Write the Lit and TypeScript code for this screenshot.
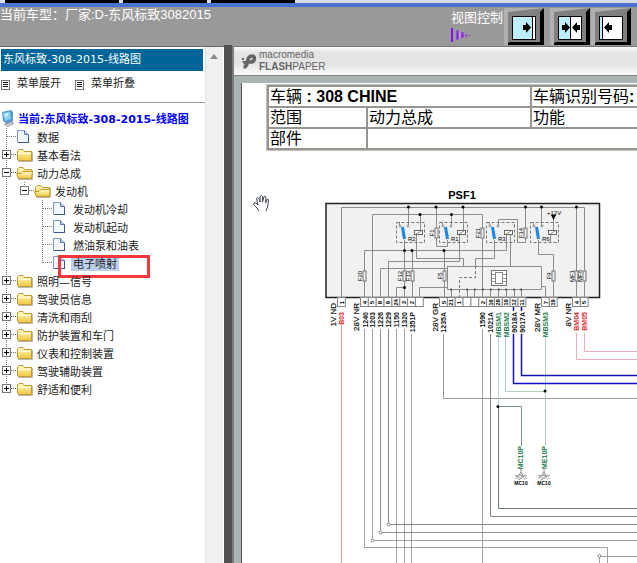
import { LitElement, html, css, svg, nothing } from "lit";
import { customElement, property } from "lit/decorators.js";
import { classMap } from "lit/directives/class-map.js";

type Icon = "file" | "folder" | "open";
interface Row {
  label: string;
  icon: Icon;
  cells: string[];
  selected?: boolean;
}

const folder = (label: string, last = false): Row => ({ label, icon: "folder", cells: [last ? "plus end" : "plus"] });
const leaf = (label: string, last = false, selected = false): Row => ({
  label,
  icon: "file",
  cells: ["guide", "blank", last ? "end" : "joint"],
  selected,
});

const ROWS: Row[] = [
  { label: "数据", icon: "file", cells: ["joint"] },
  folder("基本看法"),
  { label: "动力总成", icon: "open", cells: ["minus"] },
  { label: "发动机", icon: "open", cells: ["guide", "minus end"] },
  leaf("发动机冷却"),
  leaf("发动机起动"),
  leaf("燃油泵和油表"),
  leaf("电子喷射", true, true),
  folder("照明—信号"),
  folder("驾驶员信息"),
  folder("清洗和雨刮"),
  folder("防护装置和车门"),
  folder("仪表和控制装置"),
  folder("驾驶辅助装置"),
  folder("舒适和便利", true),
];

@customElement("tree-menu")
export class TreeMenu extends LitElement {
  static styles = css`
    :host { display: block; }
    ul { list-style: none; margin: 0; padding: 0; }
    .row { display: flex; height: 18px; position: relative; white-space: nowrap; }
    .row svg { flex: none; overflow: visible; display: block; }
    .toggle { border: 0; padding: 0; margin: 0; background: none; width: 18px; height: 18px; flex: none; }
    .label { color: #222; text-decoration: none; line-height: 14px; margin: 4px 0 0 1px; padding: 0 2px; height: 13px; }
    .selected .label { background: #bccfec; }
    .root { display: flex; height: 18px; align-items: center; gap: 2px; white-space: nowrap; }
    .root a { color: #00f; font-weight: bold; text-decoration: none; line-height: 16px; padding-top: 2px; }
    .mark { position: absolute; left: 58px; top: 1px; width: 86px; height: 17px; border: 3px solid #f5373b; pointer-events: none; }
  `;

  private cell(kind: string) {
    const box = kind.startsWith("plus") || kind.startsWith("minus");
    const end = kind.endsWith("end");
    const art = html`<svg width="18" height="18" viewBox="0 0 18 18" aria-hidden="true">
      ${kind === "blank" ? nothing : svg`<path d=${end ? "M6.500 0V9" : "M6.500 0V18"} stroke="#777" stroke-dasharray="1 1" fill="none"/>`}
      ${kind === "blank" || kind === "guide" ? nothing : svg`<path d="M7 8.500H18" stroke="#777" stroke-dasharray="1 1" fill="none"/>`}
      ${box
        ? svg`<rect x="2.500" y="4.500" width="8" height="8" fill="#fff" stroke="#777"/>
          <path d=${kind.startsWith("plus") ? "M4 8.500H9M6.500 6V11" : "M4 8.500H9"} stroke="#000"/>`
        : nothing}
    </svg>`;
    return box
      ? html`<button class="toggle" aria-label=${kind.startsWith("plus") ? "展开" : "折叠"}>${art}</button>`
      : art;
  }

  private icon(kind: Icon) {
    if (kind === "file")
      return html`<svg width="16" height="18" viewBox="0 0 16 18" aria-hidden="true">
        <path d="M-.500 2.500H6.500L10.500 6.500V14.500H-.500Z" fill="#f3f8ff" stroke="#8296c8"/>
        <path d="M6.500 2.500V6.500H10.500" fill="#b9cdf2" stroke="#5f78b8"/>
        <path d="M0 14.500H11M10.500 7V15" stroke="#3f5694"/>
      </svg>`;
    return html`<svg width="16" height="18" viewBox="0 0 16 18" aria-hidden="true">
      <defs><linearGradient id="g" x2="0" y2="1"><stop stop-color="#fffbc4"/><stop offset="1" stop-color="#f1c744"/></linearGradient></defs>
      <path d="M0 15.500H14.500V6" stroke="#b9b9b9" fill="none"/>
      <path d="M-.500 13.500V5L1 3.500H5L6.500 5.500H13.500V14.500H.500Z" fill="url(#g)" stroke="#c39a2b"/>
      ${kind === "open"
        ? svg`<path d="M.500 14.500L-1.500 9.500H3L5 7.500H14.500L13.500 14.500Z" fill="url(#g)" stroke="#c39a2b"/>`
        : svg`<path d="M0 7.500H13" stroke="#fffde0"/>`}
    </svg>`;
  }

  render() {
    return html`
      <div class="root">
        <svg width="16" height="18" viewBox="0 0 16 18" aria-hidden="true">
          <path d="M6 12L12 10L14 14L7 17L4 15Z" fill="#9aa2ad"/>
          <path d="M2 2L11 0L13 2V11L6 13L3 11Z" fill="#5c96cf"/>
          <path d="M3 3L10 1.500L11 9L5 11Z" fill="#7ed2fa"/>
          <path d="M4 4L9 3L6 8Z" fill="#d3f4ff"/>
          <path d="M5 16L12 13" stroke="#e9edf2"/>
        </svg>
        <a href="#">当前:东风标致-308-2015-线路图</a>
      </div>
      <ul>
        ${ROWS.map(
          (r) => html`<li class=${classMap({ row: true, selected: !!r.selected })}>
            ${r.cells.map((c) => this.cell(c))}${this.icon(r.icon)}<a class="label" href="#">${r.label}</a>
            ${r.selected ? html`<span class="mark"></span>` : nothing}
          </li>`
        )}
      </ul>
    `;
  }
}

@customElement("view-button")
export class ViewButton extends LitElement {
  @property() kind = "right";
  static styles = css`
    :host { display: block; }
    button { display: block; border: 0; padding: 0; background: none; }
    svg { display: block; }
  `;
  render() {
    const arrowR = (x: number) => svg`<path d="M${x} 17H${x + 3}V14L${x + 8} 19.500L${x + 3} 25V22H${x}Z" fill="#000"/>`;
    const arrowL = (x: number) => svg`<path d="M${x + 8} 17H${x + 5}V14L${x} 19.500L${x + 5} 25V22H${x + 8}Z" fill="#000"/>`;
    const split = this.kind === "right" ? 28 : this.kind === "both" ? 20 : 11;
    return html`<button aria-label=${this.kind}>
      <svg width="40" height="37" viewBox="0 0 40 37">
        <path d="M0 0H40L36 4H4V37H0Z" fill="#b0b0b0"/>
        <path d="M4 4L40 0L36 34L4 37Z" fill="#808080"/>
        <path d="M4 37V35L6 34H36V4L40 0V37Z" fill="#000"/>
        <rect x="8.500" y="8.500" width="23" height="23" fill="#fff" stroke="#000"/>
        <rect x="9" y="9" width=${split - 9} height="22" fill="#bdeeff"/>
        <path d="M${split + 0.5} 8V32" stroke="#000"/>
        ${this.kind === "right" ? arrowR(19) : this.kind === "both" ? [arrowR(12), arrowL(22)] : arrowL(13)}
      </svg>
    </button>`;
  }
}

const FAR = 2400;

@customElement("wiring-diagram")
export class WiringDiagram extends LitElement {
  static styles = css`
    :host { display: block; }
    svg { display: block; overflow: visible; font-family: "Liberation Sans", sans-serif; }
    .thin { fill: none; stroke: #8c8c8c; stroke-width: 1; }
    .dash { fill: none; stroke: #777; stroke-dasharray: 3 2; }
    .pin { fill: #fff; stroke: #888; }
    .fuse { fill: #eee; stroke: #777; }
    .tag { font-size: 7px; font-weight: bold; text-anchor: end; }
    .num { font-size: 6px; font-weight: bold; text-anchor: middle; }
    .group { font-size: 8px; text-anchor: end; stroke: #111; stroke-width: 0.2px; }
    .small { font-size: 6px; }
    .ground { font-size: 5px; font-weight: bold; text-anchor: middle; }
    .title { font-size: 11px; font-weight: bold; text-anchor: middle; }
  `;

  private relay(x: number, name: string) {
    return svg`
      <rect class="dash" x=${x + 0.5} y="222.500" width="28" height="20"/>
      <circle cx=${x + 4} cy="226" r="1" class="thin"/><circle cx=${x + 12} cy="226" r="1" class="thin"/>
      <path d="M${x + 6.5} 227L${x + 8.5} 239" stroke="#1f83e0" stroke-width="3"/>
      <path class="thin" d="M${x + 8.5} 240V243M${x + 3.5} 222V225"/>
      <rect x=${x + 18.5} y="230.500" width="8" height="4" fill="#fff" stroke="#666"/>
      <path class="thin" d="M${x + 20} 234L${x + 25} 231M${x + 20.5} 235V242"/>
      <text class="small" x=${x + 12} y="241">${name}</text>`;
  }

  private fuse(x: number, y: number, name: string) {
    return svg`<rect class="fuse" x=${x - 1} y=${y} width="3" height="10"/>
      <text class="small" text-anchor="middle" transform="translate(${x - 2} ${y + 5}) rotate(-90)">${name}</text>`;
  }

  private pins(x: number, names: string[]) {
    return names.map(
      (n, i) => svg`<rect class="pin" x=${x + i * 7.85} y="297.500" width="7.850" height="9"/>
        <text class="num" transform="translate(${x + i * 7.85 + 6} 302.500) rotate(-90)">${n}</text>`
    );
  }

  private tag(x: number, name: string, color = "#111", cls = "tag", y = 312) {
    return svg`<text class=${cls} fill=${color} transform="translate(${x + 2.5} ${y}) rotate(-90)">${name}</text>`;
  }

  private wire(d: string, color = "#a2a2a2", width = 1) {
    return svg`<path d=${d} fill="none" stroke=${color} stroke-width=${width}/>`;
  }

  private ground(x: number, name: string) {
    return svg`<path class="thin" d="M${x} 469V472L${x - 2} 475H${x + 2}L${x} 472"/>
      <path d="M${x - 6} 475.500H${x + 6}M${x - 6} 479L${x - 3} 476L${x} 479L${x + 3} 476L${x + 6} 479M${x - 5} 476L${x - 2} 480L${x + 1} 476L${x + 4} 480" fill="none" stroke="#aaa"/>
      <text class="ground" x=${x} y="485">${name}</text>`;
  }

  render() {
    const green = "#157a45";
    const red = "#e8262c";
    const dots = [[408.5, 207], [436, 207], [463, 207], [525.5, 207], [541.5, 207], [576.5, 207], [420, 214.5], [451.5, 214.5],
      [404.5, 250.5], [412, 250.5], [444, 250.5], [404.5, 287.5], [498, 406.5], [545, 391]];
    return html`<svg width="395" height="412" viewBox="242 151 395 412" role="img" aria-label="PSF1">
      ${this.wire("M341.500 325V563", "#dd9a94")}
      ${this.wire(`M364.500 329V547.500H607.500V${FAR}`)}
      ${this.wire(`M372.500 329V540.500H${FAR}`)}
      ${this.wire(`M380.500 329V532.500H${FAR}`, "#929292")}
      ${this.wire(`M388.500 329V524.500H${FAR}`, "#858585")}
      ${this.wire("M396.500 329V563M404.500 329V563M411.500 334V563M482.500 329V563")}
      ${this.wire(`M443.500 334V398.500H${FAR}`, "#999")}
      ${this.wire(`M490.500 334V516.500H${FAR}`, "#858585")}
      ${this.wire("M498.500 337V406", "#b9d3c8")}
      ${this.wire(`M498.500 406V508.500H${FAR}`, "#687a76")}
      ${this.wire("M498 406.500H521.500V446", "#7d9290")}
      ${this.wire("M505.500 337V391.500H545M545.500 337V446", "#b3cfc4")}
      ${this.wire(`M513.500 334V383.500H${FAR}`, "#1010c8", 1.5)}
      ${this.wire(`M521.500 334V375.500H${FAR}`, "#1414a8", 1.5)}
      ${this.wire("M513.500 307V311M521.500 307V311", "#1010c8", 1.5)}
      ${this.wire(`M576.500 333V359.500H${FAR}M584.500 333V351.500H${FAR}`, "#eeb0b6")}
      ${this.wire(`M599.500 563V556.500H${FAR}`)}
      ${[[372.5, 540.5], [380.5, 532.5], [388.5, 524.5], [599.5, 556]].map(
        ([x, y]) => svg`<circle cx=${x} cy=${y} r="1.500" fill="#fff" stroke="#888"/>`
      )}

      <text class="title" x="462" y="199">PSF1</text>
      <rect x="326" y="203.500" width="273.500" height="94" fill="#f1f1f1" stroke="#222" stroke-width="1.500"/>
      <path class="thin" d="M341.500 297V207.500H584.500V297M372.500 297V214.500H482.500V297
        M408.500 207V225M436.500 207V246.500H447.500V242M463.500 207V230M420.500 214V230M451.500 214V225
        M525.500 207V242.500H517.500V219.500H498.500V225M541.500 207V225M553.500 219V230
        M538.500 242V254.500H553.500V297M576.500 207V297
        M364.500 297V250.500H506.500V235M404.500 242V297M412.500 250V297M444.500 250V297
        M416.500 235V258.500H463.500V266M388.500 297V261.500H459.500V235M380.500 297V268.500H447
        M396.500 297V287.500H404M419.500 297V287.500H447M494.500 242V258.500H475.500V266M510.500 235V266
        M447.500 266.500H541.500V286.500H545.500V297M447.500 266V289.500H541.500V286"/>
      <path class="dash" d="M475.500 266V277.500H459.500V297"/>
      <path class="thin" d="M451.500 289V297M467.500 289V297M474.500 289V297M482.500 289V297M490.500 289V297M498.500 289V297M506.500 289V297M514.500 289V297M521.500 289V297"/>
      ${[451, 467, 475, 483, 491, 499, 506, 514, 521].map((x) => svg`<circle cx=${x} cy="289.500" r="1" fill="#444"/>`)}
      ${this.relay(396, "R2")}${this.relay(439, "R1")}${this.relay(486, "R3")}${this.relay(530, "R6")}
      ${this.fuse(436, 228, "F1")}${this.fuse(482, 228, "F21")}${this.fuse(525, 228, "F14")}
      ${this.fuse(364, 271, "F20")}${this.fuse(404, 271, "F12")}${this.fuse(412, 271, "F13")}
      ${this.fuse(444, 271, "F5")}${this.fuse(553, 271, "F9")}${this.fuse(576, 271, "MF1")}${this.fuse(584, 271, "MF6")}
      <rect x="491.500" y="270.500" width="15" height="15" fill="#fff" stroke="#777"/>
      <rect x="495.500" y="272.500" width="7" height="11" fill="#fff" stroke="#888"/>
      <path d="M492 274.500H495M492 278.500H495M492 281.500H495M503 274.500H506M503 278.500H506M503 281.500H506" stroke="#999"/>
      <text class="small" x="547" y="215">+12V</text>
      <path d="M551 215H556L553.500 220Z"/>
      ${dots.map(([x, y]) => svg`<circle cx=${x} cy=${y} r="1.500" fill="#000"/>`)}

      ${this.pins(337.5, ["1"])}
      ${this.pins(360.5, ["4", "5", "8", "9", "24", "3", "2", ""])}
      ${this.pins(439.5, ["5", "21", "1", "", "", "2", "16", "28", "19", "12", "11"])}
      ${this.pins(541.5, ["7", "19"])}
      ${this.pins(572.5, ["4", "5"])}

      ${this.tag(333, "1V ND", "#111", "group", 303)}${this.tag(356, "28V NR", "#111", "group", 303)}
      ${this.tag(435, "28V GR", "#111", "group", 303)}${this.tag(537, "28V MR", "#111", "group", 303)}
      ${this.tag(568, "8V NR", "#111", "group", 303)}
      ${this.tag(341, "B03", red)}
      ${["1240", "1203", "1226", "1229", "1150", "1320", "1351P"].map((t, i) => this.tag(365 + i * 7.85, t))}
      ${this.tag(443, "1235A")}${this.tag(482, "1590")}${this.tag(490, "1021A")}
      ${this.tag(498, "MBSM1", green)}${this.tag(506, "MBSM2", green)}
      ${this.tag(514, "9018A")}${this.tag(522, "9017A")}
      ${this.tag(545, "MBSM3", green)}${this.tag(576, "BM04", red)}${this.tag(584, "BM05", red)}
      ${this.tag(520, "MC10P", green, "tag", 446)}${this.tag(544, "ME10P", green, "tag", 446)}
      ${this.ground(521, "MC10")}${this.ground(544, "MC10")}

      <path d="M259 211L257 208L253.500 204.500Q253.500 202 256 203L258 205L256.500 198.500Q257.500 196.500 259 198.500L260 202V196.500Q261.500 194.500 262.500 196.500V202L264 196.500Q265.500 195.500 266 197.500L265.500 203L267 199.500Q269 199 268.500 201L267.500 207L266 211" fill="#fff" stroke="#3e4650"/>
    </svg>`;
  }
}

@customElement("app-root")
export class AppRoot extends LitElement {
  static styles = css`
    :host {
      display: flex;
      flex-direction: column;
      height: 100vh;
      overflow: hidden;
      background: #999;
      font-family: "Liberation Sans", "Noto Sans CJK SC", sans-serif;
    }
    .tabs { display: flex; gap: 4px; height: 3px; padding-left: 5px; background: #d5dcea; flex: none; }
    .tab { background: #000; width: 84px; }
    .tab.wide { width: 114px; }
    .stripe { height: 4px; background: #4c72cf; flex: none; }
    header { display: flex; justify-content: space-between; height: 38px; padding-right: 6px; color: #fff; font-size: 13px; flex: none; white-space: nowrap; }
    .model { font-size: 13px; line-height: 16px; font-weight: normal; margin: 0; }
    .tools { display: flex; gap: 1px; padding-top: 1px; }
    .tools view-button:first-of-type { margin-right: 5px; }
    .caption { line-height: 20px; }
    .caption svg { display: block; }
    main { display: flex; flex: 1; min-height: 0; }
    aside { display: flex; width: 224px; flex: none; background: #fff; border-top: 1px solid #666; margin-top: 1px; font: 11px "DejaVu Sans", "Noto Sans CJK SC", sans-serif; box-sizing: border-box; }
    .menu { flex: 1; padding-top: 2px; min-width: 0; }
    .menu h2 { margin: 0 2px 0 1px; padding-left: 2px; background: #069; color: #fff; font-size: 11px; font-weight: normal; line-height: 21px; height: 22px; white-space: nowrap; }
    .actions { display: flex; gap: 14px; height: 32px; align-items: center; padding: 0 1px; border-bottom: 1px solid #999; margin-bottom: 7px; box-sizing: border-box; }
    .actions button { display: flex; align-items: center; gap: 7px; border: 0; background: none; padding: 0 0 6px; font: inherit; color: #222; line-height: 16px; }
    .actions svg { margin-top: 3px; }
    .scroll { width: 17px; background: #f0f0f0; border-left: 1px solid #e3e3e3; border-right: 1px solid #fff; flex: none; }
    .scroll svg { display: block; margin: 7px 4px; }
    .splitter { width: 8px; background: #505050; flex: none; }
    .viewer { display: flex; flex-direction: column; flex: 1; min-width: 0; border-left: 2px solid #7d7d7d; border-top: 1px solid #777; background: #a9b4b4; margin-top: 1px; overflow: hidden; }
    .bar { display: flex; align-items: center; gap: 2px; height: 28px; padding-left: 7px; background: linear-gradient(#fafafa, #e4e4e4 20%, #e4e4e4 60%, #fbfbfb); border-bottom: 1px solid #808585; flex: none; }
    .brand { color: #666; font-size: 10px; line-height: 12px; }
    .brand div { height: 12px; }
    .page { flex: 1; margin: 7px 0 0 7px; border-left: 1px solid #555; background: #fff; overflow: hidden; }
    table { border-collapse: separate; border-spacing: 2px; background: #96958f; border: 1px solid #c3c1ba; margin: 1px 0 0 24px; table-layout: fixed; width: 600px; font-size: 16px; color: #000; }
    td { background: #fff; height: 19px; line-height: 19px; padding: 0 1px; text-align: left; white-space: nowrap; overflow: hidden; }
    .c1 { width: 97px; }
    .c2 { width: 162px; }
  `;

  render() {
    const list = html`<svg width="9" height="10" viewBox="0 0 9 10" aria-hidden="true">
      <rect x=".500" y=".500" width="8" height="9" fill="#fff" stroke="#777"/>
      <path d="M2 2.500H7M2 4.500H7M2 6.500H7" stroke="#111"/>
    </svg>`;
    return html`
      <div class="tabs"><span class="tab wide"></span><span class="tab"></span><span class="tab"></span></div>
      <div class="stripe"></div>
      <header>
        <h1 class="model">当前车型：厂家:D-东风标致3082015</h1>
        <div class="tools">
          <div class="caption">
            视图控制
            <svg width="24" height="15" viewBox="0 0 24 15" aria-hidden="true">
              <path d="M1 0V14" stroke="#8512f0" stroke-width="2"/>
              <path d="M6.500 2V12" stroke="#8512f0" stroke-width="2"/>
              <path d="M8.500 3V11" stroke="#c79df0"/>
              <path d="M11.500 4V10" stroke="#8512f0" stroke-width="2"/>
              <path d="M15 6V9M18 7V8" stroke="#8512f0"/>
              <path d="M3 1.500L14 6M3 13L14 9" stroke="#b48ad8" stroke-dasharray="1 2"/>
            </svg>
          </div>
          <view-button kind="right"></view-button>
          <view-button kind="both"></view-button>
          <view-button kind="left"></view-button>
        </div>
      </header>
      <main>
        <aside>
          <div class="menu">
            <h2>东风标致-308-2015-线路图</h2>
            <div class="actions">
              <button>${list}菜单展开</button>
              <button>${list}菜单折叠</button>
            </div>
            <tree-menu></tree-menu>
          </div>
          <div class="scroll"><svg width="8" height="5" viewBox="0 0 8 5" aria-hidden="true"><path d="M0 5L4 0L8 5Z" fill="#888"/></svg></div>
        </aside>
        <div class="splitter"></div>
        <section class="viewer">
          <div class="bar">
            <svg width="16" height="16" viewBox="0 0 16 16" aria-hidden="true">
              <path d="M2.500 14Q6 14 6.500 8Q7.500 3 11 3Q13.500 3 13.500 5.500Q13.500 9 9 9H6" fill="none" stroke="#666" stroke-width="3.500"/>
              <rect x="1" y="5" width="2" height="2" fill="#666"/><path d="M1 8H5V11H3Z" fill="#666"/>
            </svg>
            <div class="brand"><div>macromedia</div><div><b>FLASH</b>PAPER</div></div>
          </div>
          <div class="page">
            <table>
              <colgroup><col class="c1" /><col class="c2" /><col /></colgroup>
              <tbody>
                <tr><td colspan="2">车辆 <b>: 308 CHINE</b></td><td>车辆识别号码<b>:</b></td></tr>
                <tr><td>范围</td><td>动力总成</td><td>功能</td></tr>
                <tr><td>部件</td><td colspan="2"></td></tr>
              </tbody>
            </table>
            <wiring-diagram></wiring-diagram>
          </div>
        </section>
      </main>
    `;
  }
}
